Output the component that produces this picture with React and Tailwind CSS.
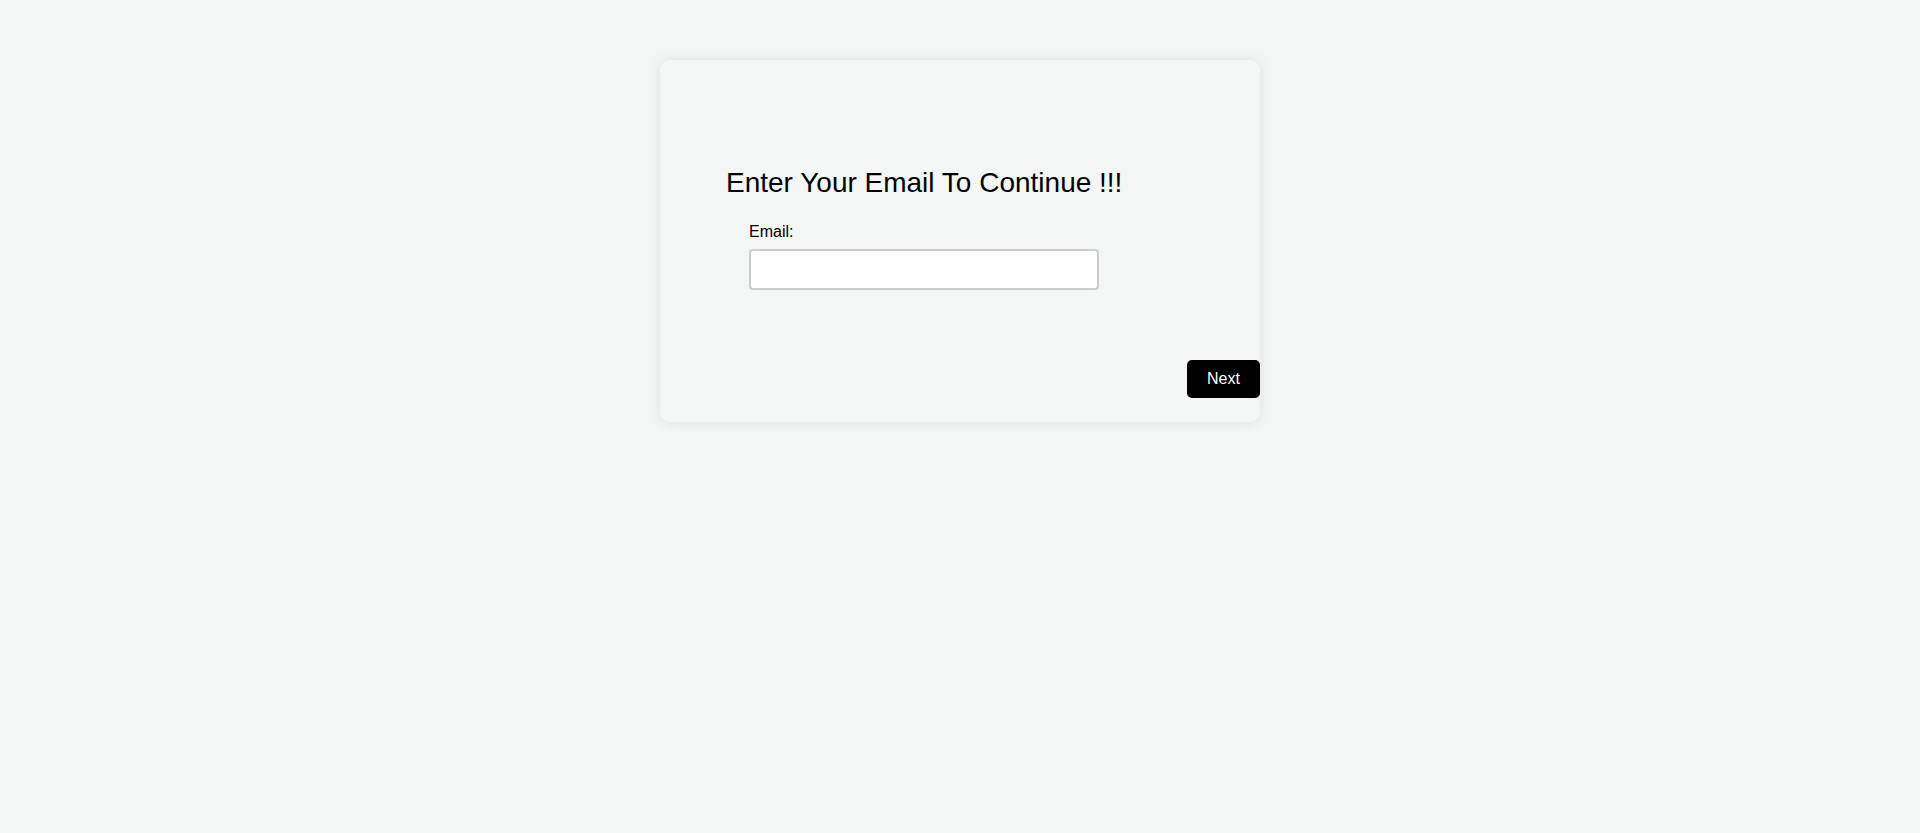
import React, { useState } from 'react';

const App = () => {
  const [email, setEmail] = useState('');

  return (
    <div className="min-h-[833px] w-full bg-[#f4f6f5] pt-[60px] font-['Liberation_Sans',Arial,sans-serif] text-black">
      <div className="mx-auto flex w-[600px] flex-col rounded-[10px] bg-[#f4f6f5] pt-[107px] pb-[24px] shadow-[0_0_14px_rgba(0,0,0,0.09)]">
        {/* Form */}
        <div className="pl-[66px]">
          <h2 className="text-[28px] leading-[32px] font-normal">Enter Your Email To Continue !!!</h2>
          <div className="mt-[24px] pl-[23px]">
            <label htmlFor="email" className="block text-[16px] leading-[18px]">
              Email:
            </label>
            <input
              id="email"
              type="email"
              value={email}
              onChange={(e) => setEmail(e.target.value)}
              className="mt-[8px] block h-[41px] w-[350px] rounded-[4px] border-2 border-[#cccccc] bg-white px-2 text-[16px] outline-none"
            />
          </div>
        </div>

        {/* Actions */}
        <button
          type="button"
          className="mt-[70px] h-[38px] w-[73px] self-end rounded-[5px] bg-black text-[16px] text-white"
        >
          Next
        </button>
      </div>
    </div>
  );
};

export default App;
